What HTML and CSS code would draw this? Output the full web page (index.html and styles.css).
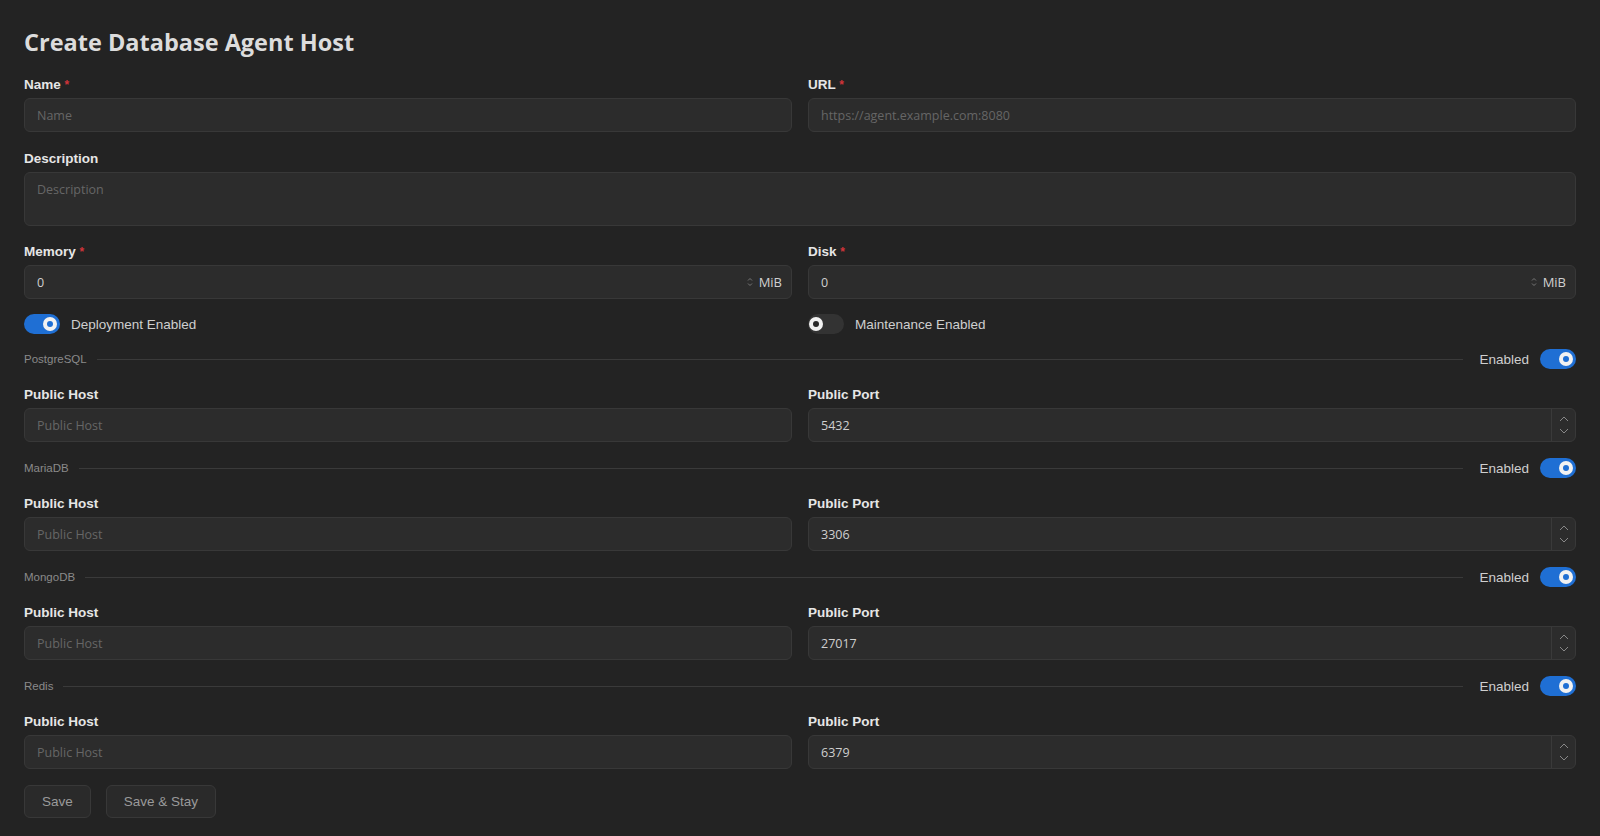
FILE: index.html
```html
<!DOCTYPE html>
<html lang="en">
<head>
    <meta charset="UTF-8">
    <meta name="viewport" content="width=device-width, initial-scale=1.0">
    <title>Create Database Agent Host</title>
    <link rel="stylesheet" href="styles.css">
</head>
<body>
<div class="page">
    <h1>Create Database Agent Host</h1>
    <form class="form">
        <div class="row">
            <div class="field">
                <label>Name <span class="req">*</span></label>
                <input class="input" type="text" placeholder="Name">
            </div>
            <div class="field">
                <label>URL <span class="req">*</span></label>
                <input class="input" type="text" placeholder="https://agent.example.com:8080">
            </div>
        </div>

        <div class="field desc">
            <label>Description</label>
            <textarea class="input textarea" placeholder="Description"></textarea>
        </div>

        <div class="row">
            <div class="field">
                <label>Memory <span class="req">*</span></label>
                <div class="input group">
                    <input type="text" value="0">
                    <span class="mini-spin">
                        <svg width="6" height="10" viewBox="0 0 6 10"><path d="M1 3.5 3 1.5 5 3.5M1 6.5 3 8.5 5 6.5" fill="none" stroke="#777" stroke-width="1"/></svg>
                    </span>
                    <span class="suffix">MiB</span>
                </div>
            </div>
            <div class="field">
                <label>Disk <span class="req">*</span></label>
                <div class="input group">
                    <input type="text" value="0">
                    <span class="mini-spin">
                        <svg width="6" height="10" viewBox="0 0 6 10"><path d="M1 3.5 3 1.5 5 3.5M1 6.5 3 8.5 5 6.5" fill="none" stroke="#777" stroke-width="1"/></svg>
                    </span>
                    <span class="suffix">MiB</span>
                </div>
            </div>
        </div>

        <div class="row toggles">
            <div class="toggle-line">
                <span class="switch on"><span class="knob"></span></span>
                <span>Deployment Enabled</span>
            </div>
            <div class="toggle-line">
                <span class="switch"><span class="knob"></span></span>
                <span>Maintenance Enabled</span>
            </div>
        </div>

        <div class="divider first">
            <span class="divider-title">PostgreSQL</span>
            <span class="divider-line"></span>
            <span class="divider-toggle">Enabled <span class="switch on"><span class="knob"></span></span></span>
        </div>
        <div class="row">
            <div class="field">
                <label>Public Host</label>
                <input class="input" type="text" placeholder="Public Host">
            </div>
            <div class="field">
                <label>Public Port</label>
                <div class="input group">
                    <input type="text" value="5432">
                    <span class="stepper">
                        <svg width="10" height="6" viewBox="0 0 10 6"><path d="M1 5 5 1 9 5" fill="none" stroke="#888" stroke-width="1"/></svg>
                        <svg width="10" height="6" viewBox="0 0 10 6"><path d="M1 1 5 5 9 1" fill="none" stroke="#888" stroke-width="1"/></svg>
                    </span>
                </div>
            </div>
        </div>

        <div class="divider">
            <span class="divider-title">MariaDB</span>
            <span class="divider-line"></span>
            <span class="divider-toggle">Enabled <span class="switch on"><span class="knob"></span></span></span>
        </div>
        <div class="row">
            <div class="field">
                <label>Public Host</label>
                <input class="input" type="text" placeholder="Public Host">
            </div>
            <div class="field">
                <label>Public Port</label>
                <div class="input group">
                    <input type="text" value="3306">
                    <span class="stepper">
                        <svg width="10" height="6" viewBox="0 0 10 6"><path d="M1 5 5 1 9 5" fill="none" stroke="#888" stroke-width="1"/></svg>
                        <svg width="10" height="6" viewBox="0 0 10 6"><path d="M1 1 5 5 9 1" fill="none" stroke="#888" stroke-width="1"/></svg>
                    </span>
                </div>
            </div>
        </div>

        <div class="divider">
            <span class="divider-title">MongoDB</span>
            <span class="divider-line"></span>
            <span class="divider-toggle">Enabled <span class="switch on"><span class="knob"></span></span></span>
        </div>
        <div class="row">
            <div class="field">
                <label>Public Host</label>
                <input class="input" type="text" placeholder="Public Host">
            </div>
            <div class="field">
                <label>Public Port</label>
                <div class="input group">
                    <input type="text" value="27017">
                    <span class="stepper">
                        <svg width="10" height="6" viewBox="0 0 10 6"><path d="M1 5 5 1 9 5" fill="none" stroke="#888" stroke-width="1"/></svg>
                        <svg width="10" height="6" viewBox="0 0 10 6"><path d="M1 1 5 5 9 1" fill="none" stroke="#888" stroke-width="1"/></svg>
                    </span>
                </div>
            </div>
        </div>

        <div class="divider">
            <span class="divider-title">Redis</span>
            <span class="divider-line"></span>
            <span class="divider-toggle">Enabled <span class="switch on"><span class="knob"></span></span></span>
        </div>
        <div class="row">
            <div class="field">
                <label>Public Host</label>
                <input class="input" type="text" placeholder="Public Host">
            </div>
            <div class="field">
                <label>Public Port</label>
                <div class="input group">
                    <input type="text" value="6379">
                    <span class="stepper">
                        <svg width="10" height="6" viewBox="0 0 10 6"><path d="M1 5 5 1 9 5" fill="none" stroke="#888" stroke-width="1"/></svg>
                        <svg width="10" height="6" viewBox="0 0 10 6"><path d="M1 1 5 5 9 1" fill="none" stroke="#888" stroke-width="1"/></svg>
                    </span>
                </div>
            </div>
        </div>

        <div class="actions">
            <button type="button" class="btn">Save</button>
            <button type="button" class="btn">Save &amp; Stay</button>
        </div>
    </form>
</div>
</body>
</html>
```

FILE: styles.css
```css
* {
    margin: 0;
    padding: 0;
    box-sizing: border-box;
}

body {
    background-color: #232323;
    font-family: 'Liberation Sans', Arial, sans-serif;
    color: #e4e4e4;
}

.page {
    padding: 26px 24px 0 24px;
}

h1 {
    font-family: 'Open Sans', sans-serif;
    font-size: 23.5px;
    font-weight: 700;
    line-height: 32px;
    color: #dcdcdc;
    margin-bottom: 17px;
}

.form {
    display: flex;
    flex-direction: column;
    gap: 16px;
}

.row {
    display: grid;
    grid-template-columns: 1fr 1fr;
    gap: 16px;
}

.desc {
    margin-top: 1px;
}

.toggles {
    margin-top: -1px;
}

.divider.first {
    margin-top: -1px;
}

.field label {
    display: block;
    font-size: 13.5px;
    font-weight: 700;
    line-height: 20px;
    margin-bottom: 3px;
    color: #e6e6e6;
}

.req {
    color: #d0343a;
    font-size: 12px;
    vertical-align: top;
}

.input {
    display: block;
    width: 100%;
    height: 34px;
    background-color: #2c2c2c;
    border: 1px solid #383838;
    border-radius: 6px;
    padding: 0 12px;
    font-family: 'Open Sans', sans-serif;
    font-size: 12.5px;
    color: #cfcfcf;
    outline: none;
}

.input::placeholder {
    color: #666;
}

.textarea {
    height: 54px;
    padding-top: 8px;
    resize: none;
}

.group {
    display: flex;
    align-items: center;
    padding: 0;
}

.group input {
    flex: 1;
    height: 100%;
    background: transparent;
    border: none;
    outline: none;
    padding: 0 12px;
    font-family: 'Open Sans', sans-serif;
    font-size: 12.5px;
    color: #cfcfcf;
}

.mini-spin {
    display: flex;
    align-items: center;
    margin-right: 6px;
}

.suffix {
    font-size: 13px;
    color: #d0d0d0;
    margin-right: 9px;
}

.stepper {
    width: 24px;
    height: 100%;
    border-left: 1px solid #3a3a3a;
    display: flex;
    flex-direction: column;
    align-items: center;
    justify-content: space-around;
    padding: 4px 0;
}

.toggle-line {
    display: flex;
    align-items: center;
    gap: 11px;
    height: 20px;
    font-size: 13.5px;
    color: #cfcfcf;
}

.switch {
    position: relative;
    display: inline-block;
    width: 36px;
    height: 20px;
    border-radius: 10px;
    background-color: #333;
}

.switch .knob {
    position: absolute;
    top: 3px;
    left: 1px;
    width: 14px;
    height: 14px;
    border-radius: 50%;
    background-color: #f2f2f2;
}

.switch .knob::after {
    content: '';
    position: absolute;
    top: 4px;
    left: 4px;
    width: 6px;
    height: 6px;
    border-radius: 50%;
    background-color: #2a2a2a;
}

.switch.on {
    background-color: #1f6fd4;
}

.switch.on .knob {
    left: 19px;
}

.switch.on .knob::after {
    background-color: #1f6fd4;
}

.divider {
    display: flex;
    align-items: center;
    height: 20px;
}

.divider-title {
    font-size: 11.5px;
    color: #8a8a8a;
    margin-right: 10px;
}

.divider-line {
    flex: 1;
    height: 1px;
    background-color: #3a3a3a;
}

.divider-toggle {
    display: flex;
    align-items: center;
    gap: 11px;
    margin-left: 16px;
    font-size: 13.5px;
    color: #cfcfcf;
}

.actions {
    display: flex;
    gap: 15px;
}

.btn {
    height: 33px;
    padding: 0 17px;
    background-color: #2a2a2a;
    border: 1px solid #383838;
    border-radius: 6px;
    font-family: 'Liberation Sans', Arial, sans-serif;
    font-size: 13.5px;
    color: #9a9a9a;
    cursor: pointer;
}
```
